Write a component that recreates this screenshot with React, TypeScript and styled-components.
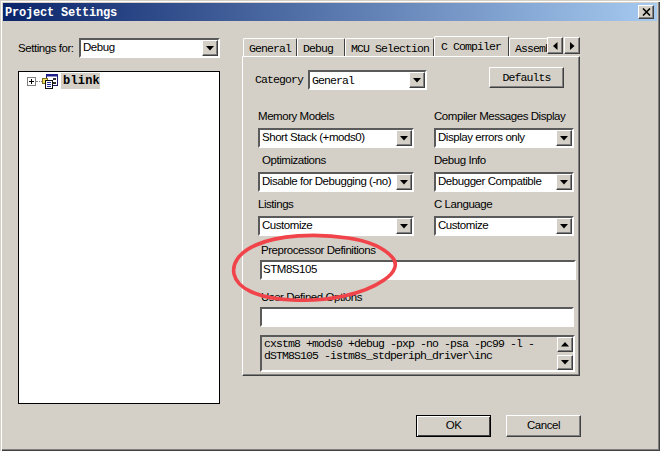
import React from "react";
import styled, { createGlobalStyle } from "styled-components";

const GlobalStyle = createGlobalStyle`
  html, body {
    margin: 0;
    padding: 0;
    background: #d4d0c8;
  }
  * {
    box-sizing: border-box;
  }
`;

const sans = `"Liberation Sans", Arial, sans-serif`;
const mono = `"Liberation Mono", "Courier New", monospace`;

const uiText = `
  font-family: ${sans};
  font-size: 11.5px;
  letter-spacing: -0.45px;
`;

const monoText = `
  font-family: ${mono};
  font-size: 11.5px;
  letter-spacing: -0.9px;
`;

const raised = `
  background: #d4d0c8;
  border-style: solid;
  border-width: 1px;
  border-color: #ffffff #404040 #404040 #ffffff;
  box-shadow: inset -1px -1px 0 #808080;
`;

const sunken = `
  border-style: solid;
  border-width: 2px;
  border-color: #5a5a5a #ffffff #ffffff #5a5a5a;
  outline: none;
`;

function ArrowGlyph({ dir }: { dir: "up" | "down" | "left" | "right" }) {
  const points = {
    down: "0,0 8,0 4,4.5",
    up: "0,4.5 8,4.5 4,0",
    left: "4.5,0 4.5,8 0,4",
    right: "0,0 0,8 4.5,4",
  }[dir];
  const horizontal = dir === "left" || dir === "right";
  return (
    <svg width={horizontal ? 5 : 8} height={horizontal ? 8 : 5}>
      <polygon points={points} fill="#000" />
    </svg>
  );
}

function Select({ value, width, mono: isMono }: { value: string; width: number; mono?: boolean }) {
  return (
    <SelectBox $width={width}>
      <SelectValue $mono={isMono}>{value}</SelectValue>
      <SelectButton>
        <ArrowGlyph dir="down" />
      </SelectButton>
    </SelectBox>
  );
}

function ProjectIcon() {
  return (
    <svg width="16" height="15" viewBox="0 0 16 15">
      <rect x="4.5" y="0.5" width="11" height="11" fill="#fff" stroke="#1a1a6a" />
      <rect x="4" y="0" width="12" height="2.5" fill="#20208a" />
      <rect x="11" y="4" width="3" height="2" fill="#333" />
      <rect x="11" y="8" width="3" height="2" fill="#333" />
      <rect x="0.5" y="4.5" width="5" height="5" fill="#f0e060" stroke="#807020" />
      <rect x="3.5" y="6.5" width="7" height="8" fill="#fff" stroke="#111" />
      <path d="M5 8.5h4M5 10.5h4M5 12.5h4" stroke="#2030a0" />
    </svg>
  );
}

const fields = [
  ["Memory Models", "Short Stack (+mods0)", "Compiler Messages Display", "Display errors only", false],
  ["Optimizations", "Disable for Debugging (-no)", "Debug Info", "Debugger Compatible", true],
  ["Listings", "Customize", "C Language", "Customize", false],
] as const;

const tabs = ["General", "Debug", "MCU Selection", "C Compiler", "Assembler"];
const tabWidths = [54, 48, 89, 75, 60];

export default function App() {
  return (
    <Frame>
      <GlobalStyle />
      <TitleBar>
        <Title>Project Settings</Title>
        <CloseButton>
          <svg width="9" height="8" viewBox="0 0 9 8">
            <path d="M1 0.5l7 7M8 0.5l-7 7" stroke="#000" strokeWidth="1.6" />
          </svg>
        </CloseButton>
      </TitleBar>

      <Body>
        <LeftColumn>
          <SettingsRow>
            <SettingsLabel>Settings for:</SettingsLabel>
            <Select value="Debug" width={141} />
          </SettingsRow>
          <TreePanel>
            <TreeRow>
              <Expander>
                <svg width="7" height="7">
                  <path d="M1 3.5h5M3.5 1v5" stroke="#000" />
                </svg>
              </Expander>
              <TreeLine />
              <ProjectIcon />
              <TreeLabel>blink</TreeLabel>
            </TreeRow>
          </TreePanel>
        </LeftColumn>

        <RightColumn>
          <TabStrip>
            <TabList>
              {tabs.map((tab, i) => (
                <Tab key={tab} $active={tab === "C Compiler"} $width={tabWidths[i]}>
                  {tab}
                </Tab>
              ))}
            </TabList>
            <TabArrows>
              <TabArrow><ArrowGlyph dir="left" /></TabArrow>
              <TabArrow><ArrowGlyph dir="right" /></TabArrow>
            </TabArrows>
          </TabStrip>

          <TabPanel>
            <CategoryRow>
              <CategoryLabel>Category</CategoryLabel>
              <Select value="General" width={119} mono />
              <DefaultsButton>Defaults</DefaultsButton>
            </CategoryRow>

            <FieldGrid>
              {fields.map(([leftLabel, leftValue, rightLabel, rightValue, indent]) => (
                <React.Fragment key={leftLabel}>
                  <Field>
                    <FieldLabel $indent={indent ? 4 : 0}>{leftLabel}</FieldLabel>
                    <Select value={leftValue} width={156} />
                  </Field>
                  <Field>
                    <FieldLabel>{rightLabel}</FieldLabel>
                    <Select value={rightValue} width={140} />
                  </Field>
                </React.Fragment>
              ))}
            </FieldGrid>

            <WideLabel $top={6}>Preprocessor Definitions</WideLabel>
            <TextInput $width={316}>STM8S105</TextInput>
            <WideLabel $top={9}>User Defined Options</WideLabel>
            <TextInput $width={314} />

            <CommandBox>
              <CommandText>
                cxstm8 +mods0 +debug -pxp -no -psa -pc99 -l -<br />
                dSTM8S105 -istm8s_stdperiph_driver\inc
              </CommandText>
              <ScrollButtons>
                <ScrollButton><ArrowGlyph dir="up" /></ScrollButton>
                <ScrollButton><ArrowGlyph dir="down" /></ScrollButton>
              </ScrollButtons>
            </CommandBox>
          </TabPanel>
        </RightColumn>
      </Body>

      <Footer>
        <DialogButton $default>OK</DialogButton>
        <DialogButton>Cancel</DialogButton>
      </Footer>

      <Annotation width="170" height="74" viewBox="0 0 170 74">
        <path
          d="M118 6C86 1 48 3 26 13C8 21 2 32 4 42C7 56 26 66 62 68C98 70 134 62 154 48C166 40 168 31 162 25C154 16 138 9 118 6Z"
          fill="none"
          stroke="#f0444a"
          strokeWidth="3.6"
        />
      </Annotation>
    </Frame>
  );
}

const Frame = styled.div`
  position: relative;
  width: 660px;
  height: 451px;
  overflow: hidden;
  display: flex;
  flex-direction: column;
  padding: 3px 3px 2px 3px;
  background: #d4d0c8;
  box-shadow:
    inset 1px 1px 0 #d4d0c8,
    inset 2px 2px 0 #ffffff,
    inset -1px -1px 0 #404040,
    inset -2px -2px 0 #808080;
  color: #000;
  font-family: ${sans};
`;

const TitleBar = styled.div`
  flex: none;
  height: 18px;
  display: flex;
  align-items: center;
  justify-content: space-between;
  padding: 0 3px 0 2px;
  background: linear-gradient(90deg, #0a246a, #a6caf0);
`;

const Title = styled.span`
  font-family: ${mono};
  font-weight: 700;
  font-size: 12px;
  letter-spacing: -0.2px;
  padding-top: 1px;
  color: #fff;
`;

const CloseButton = styled.div`
  ${raised}
  width: 16px;
  height: 14px;
  display: flex;
  align-items: center;
  justify-content: center;
`;

const Body = styled.div`
  flex: none;
  display: flex;
  gap: 22px;
  padding: 15px 0 0 15px;
`;

const LeftColumn = styled.div`
  width: 202px;
  padding-top: 2px;
`;

const SettingsRow = styled.div`
  display: flex;
  align-items: center;
  justify-content: space-between;
`;

const SettingsLabel = styled.span`
  ${uiText}
  white-space: nowrap;
`;

const SelectBox = styled.div<{ $width: number }>`
  ${sunken}
  width: ${({ $width }) => $width}px;
  height: 20px;
  flex: none;
  display: flex;
  background: #fff;
`;

const SelectValue = styled.span<{ $mono?: boolean }>`
  ${({ $mono }) => ($mono ? monoText : uiText)}
  flex: 1;
  min-width: 0;
  padding-left: 2px;
  white-space: nowrap;
  overflow: hidden;
  line-height: ${({ $mono }) => ($mono ? "17px" : "15px")};
`;

const SelectButton = styled.div`
  ${raised}
  width: 16px;
  flex: none;
  display: flex;
  align-items: center;
  justify-content: center;
`;

const TreePanel = styled.div`
  margin-top: 13px;
  height: 333px;
  background: #fff;
  border: 1px solid #000;
  padding: 1px 0 0 8px;
`;

const TreeRow = styled.div`
  display: flex;
  align-items: center;
  height: 16px;
`;

const Expander = styled.div`
  width: 9px;
  height: 9px;
  border: 1px solid #808080;
  display: flex;
`;

const TreeLine = styled.div`
  width: 6px;
  border-top: 1px dotted #808080;
`;

const TreeLabel = styled.span`
  margin-left: 3px;
  padding: 0 2px;
  width: 39px;
  height: 16px;
  background: #d4d0c8;
  font-family: ${mono};
  font-weight: 700;
  font-size: 12px;
  line-height: 16px;
  letter-spacing: 0.2px;
`;

const RightColumn = styled.div`
  width: 338px;
`;

const TabStrip = styled.div`
  position: relative;
  height: 20px;
  display: flex;
  margin-left: 1px;
`;

const TabList = styled.div`
  width: 304px;
  display: flex;
  align-items: flex-end;
  overflow: hidden;
`;

const Tab = styled.div<{ $active: boolean; $width: number }>`
  ${monoText}
  flex: none;
  position: relative;
  z-index: ${({ $active }) => ($active ? 2 : 1)};
  width: ${({ $width }) => $width}px;
  height: ${({ $active }) => ($active ? "21px" : "18px")};
  margin-bottom: ${({ $active }) => ($active ? "-1px" : "0")};
  padding: ${({ $active }) => ($active ? "3px 0 0 6px" : "3px 0 0 5px")};
  background: #d4d0c8;
  border-top: 1px solid #fff;
  border-left: 1px solid #fff;
  border-right: 1px solid #404040;
  border-top-left-radius: 2px;
  border-top-right-radius: 2px;
  white-space: nowrap;
`;

const TabArrows = styled.div`
  display: flex;
  gap: 1px;
  padding-top: 1px;
`;

const TabArrow = styled.div`
  ${raised}
  width: 16px;
  height: 17px;
  display: flex;
  align-items: center;
  justify-content: center;
`;

const TabPanel = styled.div`
  height: 320px;
  border-style: solid;
  border-width: 1px;
  border-color: #fff #404040 #404040 #fff;
  box-shadow: inset -1px -1px 0 #808080;
  padding: 13px 0 0 15px;
`;

const CategoryRow = styled.div`
  display: flex;
  align-items: flex-start;
  height: 34px;
`;

const CategoryLabel = styled.span`
  ${monoText}
  width: 50px;
  margin-left: -3px;
  margin-top: 2px;
  margin-right: 3px;
  line-height: 15px;
`;

const DefaultsButton = styled.div`
  ${raised}
  ${monoText}
  width: 75px;
  height: 21px;
  margin: -3px 0 0 62px;
  text-align: center;
  line-height: 19px;
`;

const FieldGrid = styled.div`
  display: grid;
  grid-template-columns: 156px 140px;
  column-gap: 20px;
  row-gap: 5px;
  margin-top: 5px;
`;

const Field = styled.div`
  display: flex;
  flex-direction: column;
  gap: 3px;
`;

const FieldLabel = styled.span<{ $indent?: number }>`
  ${uiText}
  height: 16px;
  padding-left: ${({ $indent }) => $indent ?? 0}px;
  line-height: 15px;
  white-space: nowrap;
`;

const WideLabel = styled.div<{ $top: number }>`
  ${uiText}
  margin-top: ${({ $top }) => $top}px;
  padding-left: 3px;
  height: 18px;
  line-height: 17px;
`;

const TextInput = styled.div<{ $width: number }>`
  ${sunken}
  ${uiText}
  margin-left: 2px;
  width: ${({ $width }) => $width}px;
  height: 20px;
  padding-left: 1px;
  background: #fff;
  line-height: 15px;
`;

const CommandBox = styled.div`
  ${sunken}
  margin: 8px 0 0 2px;
  width: 315px;
  height: 37px;
  display: flex;
  justify-content: space-between;
`;

const CommandText = styled.div`
  ${monoText}
  padding: 1px 0 0 2px;
  line-height: 12px;
  white-space: nowrap;
`;

const ScrollButtons = styled.div`
  display: flex;
  flex-direction: column;
  justify-content: space-between;
  width: 16px;
`;

const ScrollButton = styled.div`
  ${raised}
  height: 15px;
  display: flex;
  align-items: center;
  justify-content: center;
`;

const Footer = styled.div`
  flex: none;
  display: flex;
  justify-content: flex-end;
  gap: 15px;
  margin-top: 11px;
  padding-right: 76px;
`;

const DialogButton = styled.div<{ $default?: boolean }>`
  ${uiText}
  width: 75px;
  height: 22px;
  background: #d4d0c8;
  border-style: solid;
  border-width: 1px;
  border-color: ${({ $default }) =>
    $default ? "#000" : "#ffffff #404040 #404040 #ffffff"};
  box-shadow: ${({ $default }) =>
    $default
      ? "inset 1px 1px 0 #fff, inset -1px -1px 0 #404040"
      : "inset -1px -1px 0 #808080"};
  text-align: center;
  line-height: 19px;
`;

const Annotation = styled.svg`
  position: absolute;
  left: 230px;
  top: 232px;
  pointer-events: none;
`;
